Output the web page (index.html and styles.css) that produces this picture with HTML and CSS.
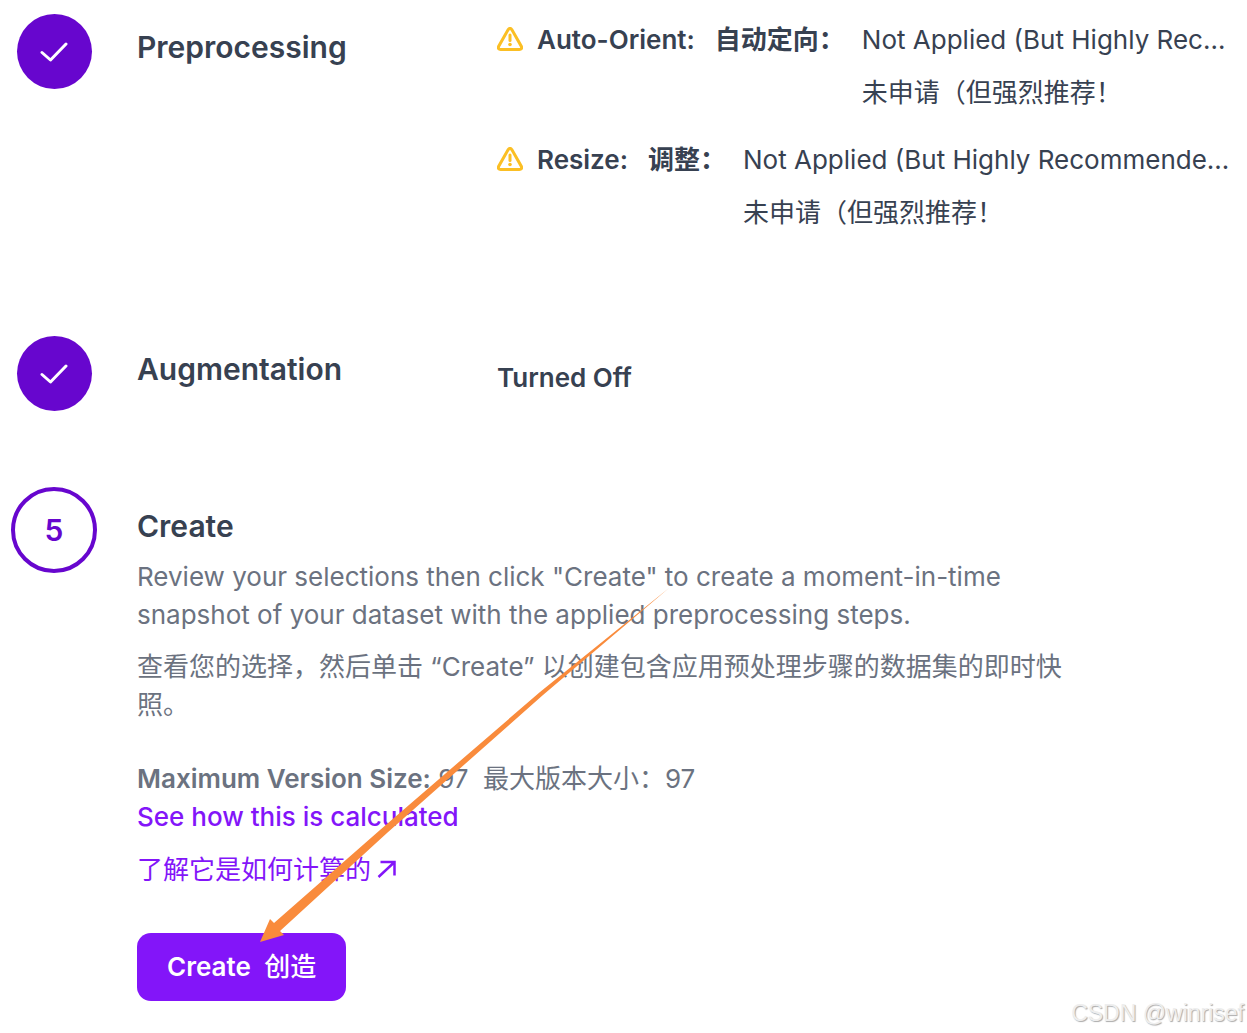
FILE: index.html
```html
<!DOCTYPE html>
<html lang="en">
<head>
  <meta charset="UTF-8" />
  <meta name="viewport" content="width=device-width, initial-scale=1.0"/>
  <title>Create Version</title>
  <link rel="stylesheet" href="styles.css">
</head>
<body>
  <main class="steps">
    <section class="step preprocessing">
      <div class="marker">
        <div class="circle done">
          <svg width="28" height="20" viewBox="0 0 28 20" aria-label="Done">
            <path d="M2 10.500L10.500 18L26 2" />
          </svg>
        </div>
      </div>
      <h2>Preprocessing</h2>
      <div class="details">
        <div class="option">
          <svg class="warning" width="26" height="24" viewBox="0 0 26 24" aria-hidden="true">
            <path d="M11.200 2.600Q13 .2 14.800 2.600L24.400 19.500Q25.400 22.300 22.300 22.500H3.700Q.6 22.300 1.600 19.500Z" />
            <path d="M13 8V13.500" />
            <circle cx="13" cy="17.500" r="1.800" />
          </svg>
          <strong>Auto-Orient:</strong>
          <strong>自动定向：</strong>
          <div class="value">
            <p>Not Applied (But Highly Recommended!)</p>
            <p>未申请（但强烈推荐！</p>
          </div>
        </div>
        <div class="option">
          <svg class="warning" width="26" height="24" viewBox="0 0 26 24" aria-hidden="true">
            <path d="M11.200 2.600Q13 .2 14.800 2.600L24.400 19.500Q25.400 22.300 22.300 22.500H3.700Q.6 22.300 1.600 19.500Z" />
            <path d="M13 8V13.500" />
            <circle cx="13" cy="17.500" r="1.800" />
          </svg>
          <strong>Resize:</strong>
          <strong>调整：</strong>
          <div class="value">
            <p>Not Applied (But Highly Recommended!)</p>
            <p>未申请（但强烈推荐！</p>
          </div>
        </div>
      </div>
    </section>

    <section class="step augmentation">
      <div class="marker">
        <div class="circle done">
          <svg width="28" height="20" viewBox="0 0 28 20" aria-label="Done">
            <path d="M2 10.500L10.500 18L26 2" />
          </svg>
        </div>
      </div>
      <h2>Augmentation</h2>
      <div class="details">
        <strong>Turned Off</strong>
      </div>
    </section>

    <section class="step create">
      <div class="marker">
        <div class="circle current">5</div>
      </div>
      <div class="content">
        <h2>Create</h2>
        <p>Review your selections then click "Create" to create a moment-in-time snapshot of your dataset with the applied preprocessing steps.</p>
        <p>查看您的选择，然后单击 “Create” 以创建包含应用预处理步骤的数据集的即时快照。</p>
        <div class="size"><strong>Maximum Version Size:</strong> 97 <span>最大版本大小：97</span></div>
        <a href="#">
          <span>See how this is calculated</span>
          <span class="translated">了解它是如何计算的<svg width="20" height="20" viewBox="0 0 20 20" aria-hidden="true"><path d="M1.500 18L17 3.500M3.500 3H17.500V16.500" /></svg></span>
        </a>
        <button type="button">Create <span>创造</span></button>
        <svg class="arrow" width="410" height="356" viewBox="0 0 410 356" aria-hidden="true">
          <path d="M0 355L10 332L14 336L120 243L280 105L409 1L283 108L127 246L20 344L24 348Z" />
        </svg>
      </div>
    </section>
  </main>
  <div class="watermark">CSDN @winrisef</div>
</body>
</html>
```

FILE: styles.css
```css
body {
  margin: 0;
  background-color: #fff;
  color: #374151;
  font-family: Inter, "Noto Sans CJK SC", sans-serif;
  font-size: 26px;
  line-height: 38px;
}
h2, p {
  margin: 0;
}
h2 {
  font-size: 30px;
  font-weight: 600;
  line-height: 38px;
}
strong {
  font-weight: 600;
}
.steps {
  padding: 14px 12px 0 11px;
}
.step {
  display: grid;
  grid-template-columns: 86px 320px minmax(0, 1fr);
  column-gap: 40px;
}
.preprocessing {
  padding-bottom: 104px;
}
.augmentation {
  padding-bottom: 76px;
}
.step > h2 {
  margin-top: 14px;
}
.marker {
  display: flex;
  justify-content: center;
  align-items: flex-start;
}
.circle {
  display: flex;
  align-items: center;
  justify-content: center;
  box-sizing: border-box;
  border-radius: 50%;
}
.circle.done {
  width: 75px;
  height: 75px;
  background-color: #6706ce;
}
.circle.done svg {
  fill: none;
  stroke: #fff;
  stroke-width: 3;
  stroke-linecap: round;
  stroke-linejoin: round;
}
.circle.current {
  width: 86px;
  height: 86px;
  border: 4px solid #6706ce;
  color: #6706ce;
  font-size: 30px;
  font-weight: 600;
}
.details {
  display: flex;
  flex-direction: column;
  gap: 29px;
  padding-top: 7px;
}
.augmentation .details {
  padding-top: 23px;
}
.option {
  display: flex;
  align-items: flex-start;
}
.option strong {
  flex: none;
  margin-right: 20px;
}
.option strong + strong {
  margin-right: 17px;
}
.warning {
  flex: none;
  margin: 6px 14px 0 0;
  fill: none;
  stroke: #fbbf24;
  stroke-width: 3;
  stroke-linecap: round;
}
.warning circle {
  fill: #fbbf24;
  stroke: none;
}
.value {
  min-width: 0;
}
.value p {
  overflow: hidden;
  text-overflow: ellipsis;
  white-space: nowrap;
}
.value p + p {
  margin-top: 15px;
}
.create {
  grid-template-columns: 86px minmax(0, 940px);
}
.content {
  position: relative;
  padding-top: 20px;
  color: #6b7280;
}
.content h2 {
  margin-bottom: 13px;
  color: #374151;
}
.content p + p {
  margin-top: 14px;
}
.size {
  margin-top: 36px;
}
.size span {
  margin-left: 7px;
}
a {
  display: inline-block;
  color: #8315f9;
  font-weight: 500;
  text-decoration: none;
}
a span {
  display: block;
}
.translated {
  margin-top: 15px;
  font-weight: 400;
}
.translated svg {
  margin-left: 6px;
  fill: none;
  stroke: #8315f9;
  stroke-width: 2.500;
}
button {
  display: block;
  margin-top: 44px;
  padding: 15px 30px;
  border: 0;
  border-radius: 14px;
  background-color: #8315f9;
  color: #fff;
  font: inherit;
  font-weight: 600;
  cursor: pointer;
}
button span {
  margin-left: 7px;
  font-weight: 500;
}
/* pointer to the create button */
.arrow {
  position: absolute;
  left: 123px;
  bottom: 58px;
  fill: #f98b3c;
  pointer-events: none;
}
.watermark {
  position: absolute;
  right: 3px;
  bottom: 5px;
  color: #eee;
  font-family: "Liberation Sans", sans-serif;
  font-size: 23px;
  line-height: 30px;
  text-shadow: 1px 1px 1px #aaa;
}
```
